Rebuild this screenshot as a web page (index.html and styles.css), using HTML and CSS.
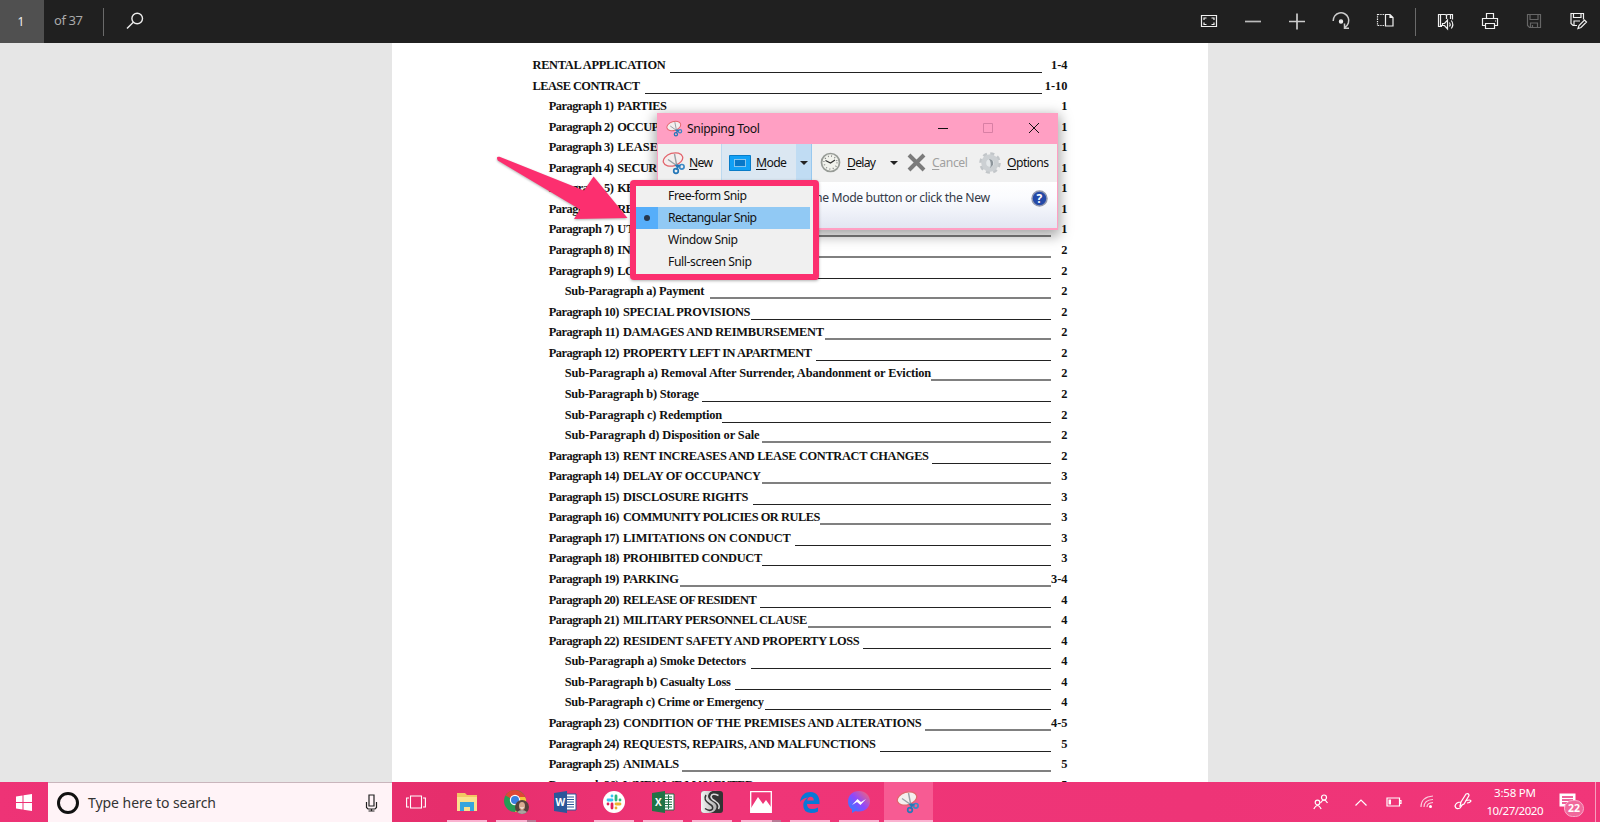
FILE: index.html
```html
<!DOCTYPE html>
<html lang="en">
<head>
<meta charset="utf-8">
<title>Lease contract</title>
<link rel="stylesheet" href="styles.css">
</head>
<body>
<div class="screen">
  <header class="bar">
    <div class="page-box"><span data-w="5">1</span></div>
    <div class="page-total"><span data-w="29">of 37</span></div>
    <i class="sep"></i>
    <svg class="search" width="18" height="18" viewBox="0 0 18 18" fill="none" stroke="#eee" stroke-width="1.4"><circle cx="11.2" cy="6.5" r="5.3"/><path d="M7.3 10.3 1 16.5"/></svg>
    <div class="tools">
      <svg viewBox="0 0 20 20"><path d="M2.5 4.5h15v11h-15zM5 9V7h2.5M12.500 7H15v2M15 11.500v2h-2.500M7.500 13.500H5v-2"/></svg>
      <svg viewBox="0 0 20 20"><path d="M2 10.500h16" stroke="#bbb" stroke-width="1.700"/></svg>
      <svg viewBox="0 0 20 20"><path d="M2 10.500h16M10 2.500v16" stroke="#ccc" stroke-width="1.700"/></svg>
      <svg viewBox="0 0 20 20"><path d="M2.200 10a7.800 7.800 0 1 1 11.800 6.300M13.500 12.500v4.800h4.500" stroke="#ccc" stroke-width="1.500"/><circle cx="10" cy="10.500" r="1.600" fill="#eee"/></svg>
      <svg viewBox="0 0 20 20"><path d="M10.500 3.500h4.500l3 3V15h-7.500zM15 3.500v3h3"/><path d="M2.500 3v12M3 3.500h7M3 14.500h7" stroke-dasharray="1.300 1"/></svg>
      <i class="sep"></i>
      <svg viewBox="0 0 20 20"><path d="M6 15.500H2.500v-12H9q1 0 1.500 1 .500-1 1.500-1h4.500v5M4.500 4v10.500h3M10.500 4.500V8M6.500 12.500h2l3-3.500v9l-3-3.500h-2zM13.500 11.500q1.500 2 0 4M15.300 9.500q3 4 0 8M14.500 4v4"/></svg>
      <svg viewBox="0 0 20 20"><path d="M6.500 7.500v-5h7v5M5.500 14.500h-3v-7h15v7h-3M5.500 12.500h9v5h-9zM15 10h1"/></svg>
      <svg viewBox="0 0 20 20" class="dim"><path d="M3.500 3.500h13v13h-11l-2-2zM6 3.500v5h8v-5M6.500 16.500v-4.500h7v4.500M8.500 14v2"/></svg>
      <svg viewBox="0 0 20 20"><path d="M9 14.500H5l-2-2v-10h12.500v6M5.500 2.500v4h7.500v-4M6 14v-4h6M10 17.500l1-3 5.500-5.500 2 2L13 16.500z"/></svg>
    </div>
  </header>

  <main class="viewer"><section class="paper" id="toc"></section></main>

  <footer class="taskbar">
    <div class="start"><svg width="16" height="17" viewBox="0 0 16 17" fill="#fff"><path d="M0 2.500 6.500 1.500v6.500H0zM7.500 1.300 16 0v8H7.500zM0 9h6.500v6.500L0 14.500zM7.500 9H16v8l-8.500-1.300z"/></svg></div>
    <div class="find">
      <i class="ring"></i><span class="find-text" data-w="128">Type here to search</span>
      <svg width="13" height="18" viewBox="0 0 13 18" fill="none" stroke="#222" stroke-width="1.200"><path d="M4 1h5v11H4zM1.500 8v5.500l1.500 1.500h7l1.500-1.500V8M6.500 15v2.500M3.500 17h6"/></svg>
    </div>
    <div class="view"><svg width="20" height="14" viewBox="0 0 20 14" fill="none" stroke="#fff" stroke-width="1.100"><path d="M4.500 1h11v12h-11zM3 3H.600v9H3M17 3h2.400v9H17"/></svg></div>
    <div class="apps">
      <div class="app"><svg width="22" height="20" viewBox="0 0 22 20"><path d="M1 1h8l2 2h10v16H1z" fill="#f2c763"/><path d="M1 5h20v14H1z" fill="#fbe08d"/><path d="M4 10h14v9h-4v-4H8v4H4z" fill="#36a5dd"/></svg></div>
      <div class="app double"><svg width="26" height="26" viewBox="0 0 26 26"><circle cx="12" cy="12" r="11" fill="#279b55"/><path d="M2.500 6.500A11 11 0 0 1 23 12H12z" fill="#df4636"/><path d="M23 10a11 11 0 0 1-11 13l5-9V8h5z" fill="#f5c43c"/><circle cx="12" cy="11" r="5.200" fill="#fff"/><circle cx="12" cy="11" r="4" fill="#397fe0"/><circle cx="19" cy="18" r="7" fill="#55423c"/><ellipse cx="19" cy="17" rx="3" ry="4" fill="#d9aa92"/><path d="M14 23q5-4 10 0a7 7 0 0 1-10 0" fill="#aaa4a0"/><path d="M17.500 18.500q1.500 1.500 3 0" stroke="#fff" fill="none"/></svg></div>
      <div class="app bare"><svg width="23" height="22" viewBox="0 0 23 22"><path d="M11 3h11v16H11z" fill="#fff" stroke="#2b579a"/><path d="M13 6h7M13 8.500h7M13 11h7M13 13.500h7M13 16h7" stroke="#2b579a"/><path d="m0 2 13-2v22L0 20z" fill="#2b579a"/><text x="1.500" y="15" class="glyph">W</text></svg></div>
      <div class="app"><svg width="22" height="22" viewBox="0 0 22 22"><circle cx="11" cy="11" r="11" fill="#fff"/><g fill="none" stroke-width="2.800" stroke-linecap="round"><path d="M9 5v.1M5 9h4" stroke="#36c5f0"/><path d="M13 5v4M17 9v.1" stroke="#2eb67d"/><path d="M13 13h4M13 17v.1" stroke="#ecb22e"/><path d="M9 13v4M5 13v.1" stroke="#e01e5a"/></g></svg></div>
      <div class="app"><svg width="23" height="22" viewBox="0 0 23 22"><path d="M11 3h11v16H11z" fill="#fff" stroke="#217346"/><path d="M13 6h7M13 8.500h7M13 11h7M13 13.500h7M13 16h7M16.500 4v14" stroke="#217346"/><path d="m0 2 13-2v22L0 20z" fill="#217346"/><text x="3" y="15" class="glyph">X</text></svg></div>
      <div class="app"><svg width="24" height="24" viewBox="0 0 24 24"><defs><linearGradient id="yin"><stop offset="0" stop-color="#f4f4f4"/><stop offset="1" stop-color="#aaa"/></linearGradient></defs><rect x="1" y="1" width="22" height="22" rx="3" fill="#333"/><path d="M4 1h14Q9 0 8 6q0 3.500 5 6 5 3 3 7-2 4-8 4H4q-3 0-3-3V4q0-3 3-3z" fill="url(#yin)"/><path d="M18.500 5.500Q12 2.500 11 6.500q0 2.500 4 4.500 6 4 3.500 8" fill="none" stroke="#ddd" stroke-width="1.500"/><path d="M5 18.500q5 3.500 7.500.500 1-3-3-5Q3 10 6 5" fill="none" stroke="#333" stroke-width="1.500"/></svg></div>
      <div class="app double"><svg width="22" height="22" viewBox="0 0 22 22"><path d="M.700.700h20.600v20.600H.700z" fill="none" stroke="#fff" stroke-width="1.300"/><path d="M1 17 8 6l5 7 3-4 5 7v5H1z" fill="#fff"/></svg></div>
      <div class="app"><svg width="20" height="21" viewBox="0 0 20 21"><path d="M0 10C1 3 5 0 10.500 0 17 0 20 5 19.500 12H7q0 5 5 5 3 0 6-1.500v4Q15 21 11 21 3 20.500 3.300 13 3.500 8 8 5.500 2.500 6 0 10zm7.200-1.500h6.600q0-3.700-3.200-3.700-3 0-3.400 3.700z" fill="#0878d7"/></svg></div>
      <div class="app"><svg width="24" height="24" viewBox="0 0 24 24"><defs><linearGradient id="m" x1="0" y1="1" x2="1" y2="0"><stop offset="0" stop-color="#1a8cff"/><stop offset=".5" stop-color="#8d48ff"/><stop offset="1" stop-color="#ff6968"/></linearGradient></defs><path d="M12 1C5.500 1 1 5.500 1 11.500c0 3.500 1.500 6.200 4 8V23l3.500-2q1.500.500 3.500.500c6.500 0 11-4.500 11-10.200S18.500 1 12 1z" fill="url(#m)"/><path d="m5 15 5.500-6 3.500 3 5-3-5.500 6-3.500-3z" fill="#fff"/></svg></div>
      <div class="app on"><svg width="24" height="24" viewBox="0 0 24 24"><use href="#snip"/></svg></div>
    </div>
    <div class="tray">
      <svg class="people" width="16" height="16" viewBox="0 0 16 16"><circle cx="11" cy="3.500" r="2.500"/><circle cx="4.500" cy="8.500" r="2.300"/><path d="M7.500 9q3.500-6 7 0M.800 15q3.700-7 7.400 0"/></svg>
      <svg class="up" width="14" height="9" viewBox="0 0 14 9"><path d="m1.500 7.500 5.500-5.500 5.500 5.500"/></svg>
      <svg class="battery" width="16" height="10" viewBox="0 0 16 10"><path d="M1 1h12.500v8H1zM13.500 3.500H15v3h-1.500"/><path d="M2.500 2.500h2.500v5H2.500z" fill="#fff" stroke="none"/></svg>
      <svg class="wifi" width="14" height="14" viewBox="0 0 14 14"><path d="M1 12Q1 2 13 1M4 12Q4 5 13 4.500M7 12Q7 8 13 7.500" opacity=".75"/><circle cx="10.500" cy="11.500" r="1.500" fill="#fff" stroke="none"/></svg>
      <svg class="pen" width="18" height="18" viewBox="0 0 18 18"><path d="M6 13 7 9l5-8q3-1 3 1.500l-5 8.500zM7 9q-5 0-6 4 1 4 5 2l3-4M11 8q6-2 6 0-1 2-4 2"/></svg>
      <div class="clock"><span data-w="42">3:58 PM</span><span data-w="57">10/27/2020</span></div>
      <div class="notes"><svg width="17" height="18" viewBox="0 0 17 18"><path d="M.500.500h16v13h-8L5 17v-3.500H.500z" fill="#fff"/><path d="M3 4h11M3 7h11M3 10h7" stroke="#e9317a" stroke-width="1.300"/></svg><b class="badge">22</b></div>
      <i class="edge"></i>
    </div>
  </footer>

  <section class="window">
    <div class="title">
      <svg width="17" height="17" viewBox="0 0 24 24"><g id="snip"><ellipse cx="11" cy="8.500" rx="10" ry="6.300" transform="rotate(-17 11 8.500)" fill="#f4eeee" stroke="#e2646c" stroke-width="1.300"/><path d="m6 8.500 10 7M12.500 3l2.500 13" stroke="#98a0a6" stroke-width="1.400"/><circle cx="14" cy="20" r="2.300" fill="none" stroke="#2678b8" stroke-width="1.700"/><circle cx="19.800" cy="15.800" r="2.300" fill="none" stroke="#3c8ac6" stroke-width="1.700"/><path d="m13.500 14 2.500 2-2 2.500M15 14l3.500 1" stroke="#2678b8" stroke-width="1.700" fill="none"/></g></svg>
      <span class="name" data-w="73">Snipping Tool</span>
      <svg class="controls" width="104" height="14" viewBox="0 0 104 14" fill="none" stroke="#111"><path d="M2 7.500h10"/><path d="M47.500 2.500h9v9h-9z" stroke="#d87fa4"/><path d="m93 2 10 10M103 2 93 12"/></svg>
    </div>
    <div class="commands">
      <div class="cmd new"><svg width="24" height="24" viewBox="0 0 24 24"><use href="#snip"/></svg><span data-w="24"><u>N</u>ew</span></div>
      <div class="cmd mode"><svg width="22" height="16" viewBox="0 0 22 16"><path d="M.500.500h21v15H.500z" fill="#10a0f6" stroke="#087cc8"/><path d="M5.500 4.500h11v7h-11z" fill="#0878c9" stroke="#fff" stroke-dasharray="1 1"/></svg><span data-w="31"><u>M</u>ode</span></div>
      <div class="drop"><i class="tri"></i></div>
      <div class="cmd delay"><svg width="21" height="21" viewBox="0 0 21 21"><circle cx="10.500" cy="10.500" r="9" fill="#f1f2ec" stroke="#979b96" stroke-width="1.700"/><circle cx="10.500" cy="10.500" r="6.500" fill="none" stroke="#777" stroke-width="1.500" stroke-dasharray=".8 2.600"/><path d="M5.500 8.500 10.500 11 15 8" fill="none" stroke="#333" stroke-width="1.300"/></svg><span data-w="29"><u>D</u>elay</span><i class="tri"></i></div>
      <div class="cmd cancel"><svg width="19" height="19" viewBox="0 0 19 19"><path d="m2 2 15 15M17 2 2 17" stroke="#7b7b7b" stroke-width="4"/></svg><span data-w="36"><u>C</u>ancel</span></div>
      <div class="cmd options"><svg width="22" height="24" viewBox="0 0 22 24"><circle cx="11" cy="12" r="9.300" fill="none" stroke="#c2c6c9" stroke-width="3" stroke-dasharray="4 3.300"/><circle cx="11" cy="12" r="6.300" fill="#e4e8ea" stroke="#ccd0d3" stroke-width="5"/><path d="M10 8q5 0 4 6l-3 3q2-5-1-9" fill="#8d959b"/></svg><span data-w="42"><u>O</u>ptions</span></div>
    </div>
    <div class="hint"><span data-w="175">he Mode button or click the New</span>
      <svg width="17" height="17" viewBox="0 0 17 17"><circle cx="8.500" cy="8.500" r="7.500" fill="#2449a8" stroke="#9298ad" stroke-width="1.500"/><text x="5.500" y="13" class="q">?</text></svg>
    </div>
  </section>

  <ul class="menu">
    <li><i></i><span data-w="79">Free-form Snip</span></li>
    <li class="picked"><i></i><span data-w="89">Rectangular Snip</span></li>
    <li><i></i><span data-w="70">Window Snip</span></li>
    <li><i></i><span data-w="84">Full-screen Snip</span></li>
  </ul>
  <svg class="arrow" width="136" height="72" viewBox="494 152 136 72"><path d="M499.500 156.800 584 190.500 593.600 176.500 627.500 218 574 219 580 209.500 497.800 160.500Q495.500 156 499.500 156.800Z" fill="#fc2f6f"/></svg>
</div>
<script src="toc.js"></script>
</body>
</html>
```

FILE: styles.css
```css
* { box-sizing: border-box; }
body { margin: 0; font-family: "Noto Sans", "Open Sans", sans-serif; }
svg { display: block; flex: none; }
[data-w] { display: inline-block; white-space: nowrap; flex: none; }
.screen { position: relative; width: 1600px; height: 822px; overflow: hidden; display: flex; flex-direction: column; background: #e6e6e6; }

.bar { height: 43px; flex: none; background: #202020; display: flex; align-items: center; font-size: 13px; }
.page-box { width: 44px; height: 43px; background: #505050; color: #eee; display: flex; align-items: center; justify-content: center; padding-right: 2px; font-size: 12px; }
.page-total { width: 59px; padding: 0 0 3px 10px; color: #aaa; }
.sep { width: 1px; height: 28px; background: #6a6a6a; flex: none; }
.search { margin: 0 0 2px 22px; }
.tools { margin-left: auto; display: flex; align-items: center; }
.tools svg { width: 44px; height: 20px; margin-bottom: 1px; fill: none; stroke: #f0f0f0; stroke-width: 1.2; }
.tools .dim { stroke: #666; }
.tools .sep { margin: 0 8px; }

.viewer { height: 739px; flex: none; display: flex; justify-content: center; }
.paper { width: 816px; height: 739px; overflow: hidden; background: #fff; padding: 9.4px 140.5px 0; font: bold 12.4px "Liberation Serif", serif; color: #111; }
.row { height: 20.57px; display: flex; align-items: flex-end; line-height: 15px; }
.row.l1 { padding-left: 16.2px; }
.row.l2 { padding-left: 32.2px; }
.label { flex: none; white-space: nowrap; display: flex; gap: 3.5px; }
.rule { flex: 1; height: 1px; background: #222; }
.rule.soft { height: 2px; background: #808080; }
.page-no { flex: none; width: 16.5px; display: flex; justify-content: flex-end; white-space: nowrap; }
.l0 .page-no { width: 25.5px; }

.taskbar { height: 40px; flex: none; display: flex; color: #fff; background: linear-gradient(90deg, #ee3376 0, #e62e6c 28%, #ef3577 45%, #ee3477 75%, #f13679 100%); }
.start { width: 48px; display: flex; align-items: center; justify-content: center; }
.find { width: 344px; background: #fff3f7; border-top: 1px solid #c9b5bc; display: flex; align-items: center; padding: 0 14px 0 9px; color: #333; font-size: 14px; }
.ring { width: 22px; height: 22px; border: 3px solid #111; border-radius: 50%; }
.find-text { margin: 0 auto 0 9px; }
.view { width: 50.5px; display: flex; align-items: center; padding-left: 14px; }
.apps { display: flex; }
.app { position: relative; width: 49px; display: flex; align-items: center; justify-content: center; }
.app::after { content: ""; position: absolute; left: 4.5px; right: 4.5px; bottom: 0; height: 2px; background: #fab2d0; }
.app.double::after { background: linear-gradient(90deg, #fab2d0 78%, #b97a95 78%); }
.app.bare::after { display: none; }
.app.on { background: #f75b93; }
.app.on::after { left: 0; right: 0; }
.glyph { font: bold 10px "Open Sans", sans-serif; fill: #fff; }
.tray { margin-left: auto; display: flex; align-items: center; }
.tray > svg { fill: none; stroke: #fff; stroke-width: 1.2; }
.people { margin-right: 25px; }
.up { margin-right: 18px; }
.battery { margin-right: 18px; }
.wifi { margin-right: 20px; }
.pen { margin-right: 14px; }
.clock { width: 58px; display: flex; flex-direction: column; align-items: center; font-size: 11.5px; line-height: 18px; }
.notes { position: relative; width: 36px; margin-left: 15px; }
.badge { position: absolute; left: 5px; top: 7px; width: 20px; height: 17px; border: 1px solid #f9aaca; border-radius: 9px; background: #f0689b; font-size: 10.5px; line-height: 15px; text-align: center; }
.edge { width: 1px; height: 40px; background: #f79dbd; margin-right: 4px; }

.window { position: absolute; left: 657px; top: 113px; width: 401px; height: 117px; border: 1px solid #ff9fc3; border-bottom-width: 2px; box-shadow: 0 4px 12px 2px rgba(0,0,0,.35); background: #f0f0f0; font-size: 12.2px; color: #111; }
.title { height: 30px; background: #ff9fc3; display: flex; align-items: center; padding: 0 17px 2px 8px; }
.name { margin-left: 4px; }
.controls { margin-left: auto; }
.commands { height: 38px; display: flex; }
.cmd { display: flex; align-items: center; padding-bottom: 1px; }
.new { width: 63px; padding-left: 4px; gap: 3px; }
.mode { width: 75px; padding-left: 7px; gap: 5px; background: #dbe7f2; border-left: 1px solid #bcd9f0; }
.drop { width: 16px; background: #c0dcf3; border-right: 1px solid #98c8ef; display: flex; align-items: center; justify-content: center; }
.tri { border: 4px solid transparent; border-top-color: #222; border-bottom: 0; }
.delay { padding-left: 8px; gap: 6px; }
.delay .tri { margin-left: 8px; }
.cancel { margin-left: 9px; gap: 6px; color: #a0a0a0; }
.options { margin-left: 11px; gap: 6px; }
u { text-underline-offset: 2px; }
.hint { height: 46px; display: flex; align-items: flex-start; padding: 7px 9px 0 157px; background: linear-gradient(#fff 0, #fafbfe 35%, #e2e6f2 100%); color: #343a48; }
.hint svg { margin: 1px 0 0 auto; }
.q { font: bold 12px "Open Sans", sans-serif; fill: #fff; }

.menu { position: absolute; left: 630px; top: 180px; width: 189px; height: 100px; margin: 0; padding: 0 3px 0 0; list-style: none; border: 6px solid #fc2f6f; border-radius: 4px; background: #f0f0f0; font-size: 12.2px; color: #111; box-shadow: 0 1px 3px rgba(0,0,0,.3); }
.menu li { height: 22px; display: flex; align-items: center; }
.menu li:first-child { height: 21px; }
.menu span { padding-bottom: 2px; }
.menu i { width: 22px; height: 22px; margin-right: 10px; display: flex; align-items: center; justify-content: center; }
.menu .picked { background: #91c9f4; }
.picked i { background: #56aefa; }
.picked i::before { content: ""; width: 6px; height: 6px; border-radius: 50%; background: #26384d; }
.arrow { position: absolute; left: 494px; top: 152px; filter: drop-shadow(0 1px 1px rgba(0,0,0,.3)); }
```

FILE: toc.js
```js
// level, prefix, title, x where the text ends, x where the rule starts, page, soft rule
const rows = [
  [0, "", "RENTAL APPLICATION", 665.7, 670, "1-4"],
  [0, "", "LEASE CONTRACT", 640, 645, "1-10"],
  [1, "Paragraph 1)", "PARTIES", 667, 670, "1"],
  [1, "Paragraph 2)", "OCCUPANTS", 689, 692, "1"],
  [1, "Paragraph 3)", "LEASE TERM", 698, 701, "1"],
  [1, "Paragraph 4)", "SECURITY DEPOSIT", 731, 735, "1"],
  [1, "Paragraph 5)", "KEYS", 648, 652, "1"],
  [1, "Paragraph 6)", "RENT AND CHARGES", 735, 739, "1"],
  [1, "Paragraph 7)", "UTILITIES", 681, 685, "1", 1],
  [1, "Paragraph 8)", "INSURANCE", 689, 692, "2", 1],
  [1, "Paragraph 9)", "LOCKS", 659, 662, "2"],
  [2, "", "Sub-Paragraph a) Payment", 704.4, 710.2, "2", 1],
  [1, "Paragraph 10)", "SPECIAL PROVISIONS", 750.5, 751.3, "2"],
  [1, "Paragraph 11)", "DAMAGES AND REIMBURSEMENT", 824, 824.7, "2", 1],
  [1, "Paragraph 12)", "PROPERTY LEFT IN APARTMENT", 812, 816, "2"],
  [2, "", "Sub-Paragraph a) Removal After Surrender, Abandonment or Eviction", 931.3, 931.3, "2", 1],
  [2, "", "Sub-Paragraph b) Storage", 698.9, 702.5, "2"],
  [2, "", "Sub-Paragraph c) Redemption", 722.2, 722.2, "2"],
  [2, "", "Sub-Paragraph d) Disposition or Sale", 759.6, 762.5, "2", 1],
  [1, "Paragraph 13)", "RENT INCREASES AND LEASE CONTRACT CHANGES", 929, 931.6, "2"],
  [1, "Paragraph 14)", "DELAY OF OCCUPANCY", 761, 762.2, "3", 1],
  [1, "Paragraph 15)", "DISCLOSURE RIGHTS", 748.4, 753.5, "3"],
  [1, "Paragraph 16)", "COMMUNITY POLICIES OR RULES", 820.4, 820.4, "3", 1],
  [1, "Paragraph 17)", "LIMITATIONS ON CONDUCT", 790.9, 794.9, "3"],
  [1, "Paragraph 18)", "PROHIBITED CONDUCT", 762.2, 762.5, "3"],
  [1, "Paragraph 19)", "PARKING", 678.9, 680, "3-4", 1],
  [1, "Paragraph 20)", "RELEASE OF RESIDENT", 756.7, 760.4, "4"],
  [1, "Paragraph 21)", "MILITARY PERSONNEL CLAUSE", 807.3, 808, "4", 1],
  [1, "Paragraph 22)", "RESIDENT SAFETY AND PROPERTY LOSS", 859.6, 862.9, "4"],
  [2, "", "Sub-Paragraph a) Smoke Detectors", 746.2, 750.9, "4"],
  [2, "", "Sub-Paragraph b) Casualty Loss", 730.9, 734.9, "4"],
  [2, "", "Sub-Paragraph c) Crime or Emergency", 764, 764.7, "4"],
  [1, "Paragraph 23)", "CONDITION OF THE PREMISES AND ALTERATIONS", 921.8, 925, "4-5", 1],
  [1, "Paragraph 24)", "REQUESTS, REPAIRS, AND MALFUNCTIONS", 876, 880, "5"],
  [1, "Paragraph 25)", "ANIMALS", 679.3, 682.5, "5", 1],
  [1, "Paragraph 26)", "WHEN WE MAY ENTER", 754, 757, "5"]
];
const starts = [532.5, 548.7, 564.7];
document.getElementById("toc").innerHTML = rows.map(([lv, pre, text, end, rule, no, soft]) => {
  const x = starts[lv];
  const preW = pre ? (pre.length > 12 ? 70.7 : 65.1) : 0;
  const textX = x + (pre ? preW + 3.5 : 0);
  return `<div class="row l${lv}"><div class="label" style="width:${(rule - x).toFixed(1)}px">` +
    (pre ? `<span data-w="${preW}">${pre}</span>` : "") +
    `<span data-w="${(end - textX).toFixed(1)}">${text}</span></div>` +
    `<i class="rule${soft ? " soft" : ""}"></i><span class="page-no">${no}</span></div>`;
}).join("");

// Tracks each label out or in to its set width
document.querySelectorAll("[data-w]").forEach(el => {
  const want = +el.dataset.w;
  const n = el.textContent.length;
  const have = el.getBoundingClientRect().width;
  if (n > 1) {
    el.style.letterSpacing = ((want - have) / (n - 1)).toFixed(3) + "px";
    el.style.width = want + "px";
  }
});
```
